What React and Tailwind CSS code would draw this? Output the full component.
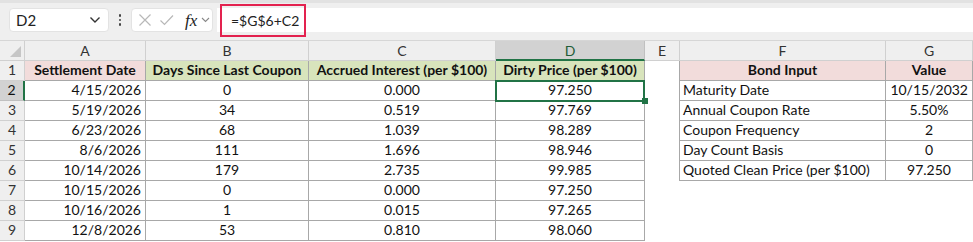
import React from "react";

const FONT = { fontFamily: "Lato, 'Noto Sans', sans-serif" };

const COLS = [
  { k: "rh", w: 25 },
  { k: "A", w: 121 },
  { k: "B", w: 163 },
  { k: "C", w: 187 },
  { k: "D", w: 149 },
  { k: "E", w: 35 },
  { k: "F", w: 206 },
  { k: "G", w: 87 },
];

const data = [
  ["4/15/2026", "0", "0.000", "97.250"],
  ["5/19/2026", "34", "0.519", "97.769"],
  ["6/23/2026", "68", "1.039", "98.289"],
  ["8/6/2026", "111", "1.696", "98.946"],
  ["10/14/2026", "179", "2.735", "99.985"],
  ["10/15/2026", "0", "0.000", "97.250"],
  ["10/16/2026", "1", "0.015", "97.265"],
  ["12/8/2026", "53", "0.810", "98.060"],
];

const bond = [
  ["Maturity Date", "10/15/2032", "right"],
  ["Annual Coupon Rate", "5.50%", "center"],
  ["Coupon Frequency", "2", "center"],
  ["Day Count Basis", "0", "center"],
  ["Quoted Clean Price (per $100)", "97.250", "center"],
];

function Cell({ w, className = "", children, align = "center" }) {
  const al =
    align === "right"
      ? "justify-end pr-[4px]"
      : align === "left"
      ? "justify-start pl-[3px]"
      : "justify-center";
  return (
    <div
      className={`h-[20px] shrink-0 flex items-end pb-[1px] text-[14px] leading-[18px] text-[#111] whitespace-nowrap overflow-hidden ${al} ${className}`}
      style={{ width: w }}
    >
      {children}
    </div>
  );
}

function Toolbar() {
  return (
    <div className="relative h-[41px] bg-[#efefef] border-b border-[#d6d6d6] flex flex-col">
      <div className="h-[3px] bg-[#e2e2e2]" />
      <div className="flex items-center h-[36px] pb-[2px]">
        <div className="ml-[9px] w-[100px] h-[24px] bg-white rounded-[4px] border border-[#e3e3e3] flex items-center justify-between pl-[6px] pr-[7px]">
          <span className="text-[15px] text-[#222]">D2</span>
          <svg width="12" height="8" viewBox="0 0 12 8">
            <path d="M1.5 1.5 L6 6 L10.5 1.5" fill="none" stroke="#333" strokeWidth="1.4" />
          </svg>
        </div>
        <div className="w-[22px] flex flex-col items-center gap-[2px]">
          <div className="w-[2.5px] h-[2.5px] bg-[#444] rounded-full" />
          <div className="w-[2.5px] h-[2.5px] bg-[#444] rounded-full" />
          <div className="w-[2.5px] h-[2.5px] bg-[#444] rounded-full" />
        </div>
        <div className="w-[82px] h-[24px] bg-white rounded-[4px] border border-[#e3e3e3] flex items-center pl-[6px]">
          <svg width="14" height="14" viewBox="0 0 14 14">
            <path d="M1.5 1.5 L12.5 12.5 M12.5 1.5 L1.5 12.5" stroke="#b8b8b8" strokeWidth="1.2" fill="none" />
          </svg>
          <svg width="16" height="14" viewBox="0 0 16 14" className="ml-[7px]">
            <path d="M1.5 7.5 L5.5 11.5 L14 2.5" stroke="#b8b8b8" strokeWidth="1.2" fill="none" />
          </svg>
          <span
            className="ml-[10px] text-[17px] leading-none text-[#222] italic"
            style={{ fontFamily: "'Liberation Serif', serif" }}
          >
            fx
          </span>
          <svg width="9" height="6" viewBox="0 0 9 6" className="ml-[4px]">
            <path d="M1 1 L4.5 4.5 L8 1" fill="none" stroke="#888" strokeWidth="1.1" />
          </svg>
        </div>
        <div className="ml-[4px] flex-1 h-[24px] bg-white flex items-center pl-[14px]">
          <span className="text-[14px] text-[#222]">=$G$6+C2</span>
        </div>
      </div>
      <div className="absolute left-[220px] top-[4px] w-[86px] h-[33px] border-[2.5px] border-[#e3224f]" />
    </div>
  );
}

const TB = "border-[#a8a8a8]";

export default function App() {
  return (
    <div className="w-[973px] h-[242px] bg-white overflow-hidden" style={FONT}>
      <Toolbar />
      <div className="flex">
        <div
          className="relative h-[20px] bg-[#efefef] border-r border-b border-[#d0d0d0]"
          style={{ width: 25 }}
        >
          <svg width="11" height="11" viewBox="0 0 11 11" className="absolute right-[3px] bottom-[3px]">
            <path d="M11 0 L11 11 L0 11 Z" fill="#c6c6c6" />
          </svg>
        </div>
        {COLS.slice(1).map((c) => (
          <div
            key={c.k}
            className={`h-[20px] shrink-0 flex items-center justify-center text-[14px] ${
              c.k === "D"
                ? "bg-[#d2d2d2] text-[#1e5c38] border-b-2 border-b-[#217346] border-r border-r-[#c0c0c0]"
                : "bg-[#efefef] text-[#333] border-b border-r border-[#d0d0d0]"
            }`}
            style={{ width: c.w }}
          >
            {c.k}
          </div>
        ))}
      </div>
      <div className="flex">
        <Cell w={25} className="bg-[#efefef] text-[#333] border-r border-b border-[#d0d0d0]">1</Cell>
        <Cell w={121} className={`bg-[#f2dcdb] font-bold border-r border-b ${TB}`}>Settlement Date</Cell>
        <Cell w={163} className={`bg-[#d8e4bc] font-bold border-r border-b ${TB}`}>Days Since Last Coupon</Cell>
        <Cell w={187} className={`bg-[#d8e4bc] font-bold border-r border-b ${TB}`}>Accrued Interest (per $100)</Cell>
        <Cell w={149} className={`bg-[#d8e4bc] font-bold border-r border-b ${TB}`}>Dirty Price (per $100)</Cell>
        <Cell w={35} className={`border-r ${TB}`} />
        <Cell w={206} className={`bg-[#f2dcdb] font-bold border-r border-b ${TB}`}>Bond Input</Cell>
        <Cell w={87} className={`bg-[#f2dcdb] font-bold border-r border-b ${TB}`}>Value</Cell>
      </div>
      {data.map((r, i) => {
        const rowNum = i + 2;
        const b = bond[i];
        const sel = rowNum === 2;
        return (
          <div className={`flex ${sel ? "relative z-10" : ""}`} key={rowNum}>
            <Cell
              w={25}
              className={
                sel
                  ? "bg-[#d2d2d2] text-[#1e5c38] border-r-2 border-r-[#217346] border-b border-b-[#c0c0c0]"
                  : "bg-[#efefef] text-[#333] border-r border-b border-[#d0d0d0]"
              }
            >
              {rowNum}
            </Cell>
            <Cell w={121} align="right" className={`border-r border-b ${TB}`}>{r[0]}</Cell>
            <Cell w={163} className={`border-r border-b ${TB}`}>{r[1]}</Cell>
            <Cell w={187} className={`border-r border-b ${TB}`}>{r[2]}</Cell>
            <div className="relative">
              <Cell w={149} className={`border-r border-b ${TB}`}>{r[3]}</Cell>
              {sel && (
                <>
                  <div className="absolute left-[-1px] top-[-1px] w-[150px] h-[22px] border-2 border-[#217346]" />
                  <div className="absolute left-[146px] top-[17px] w-[6px] h-[6px] bg-[#217346]" />
                </>
              )}
            </div>
            <Cell w={35} className={b ? `border-r ${TB}` : ""} />
            {b ? (
              <>
                <Cell w={206} align="left" className={`border-r border-b ${TB}`}>{b[0]}</Cell>
                <Cell w={87} align={b[2]} className={`border-r border-b ${TB}`}>{b[1]}</Cell>
              </>
            ) : (
              <>
                <Cell w={206} />
                <Cell w={87} />
              </>
            )}
          </div>
        );
      })}
    </div>
  );
}
